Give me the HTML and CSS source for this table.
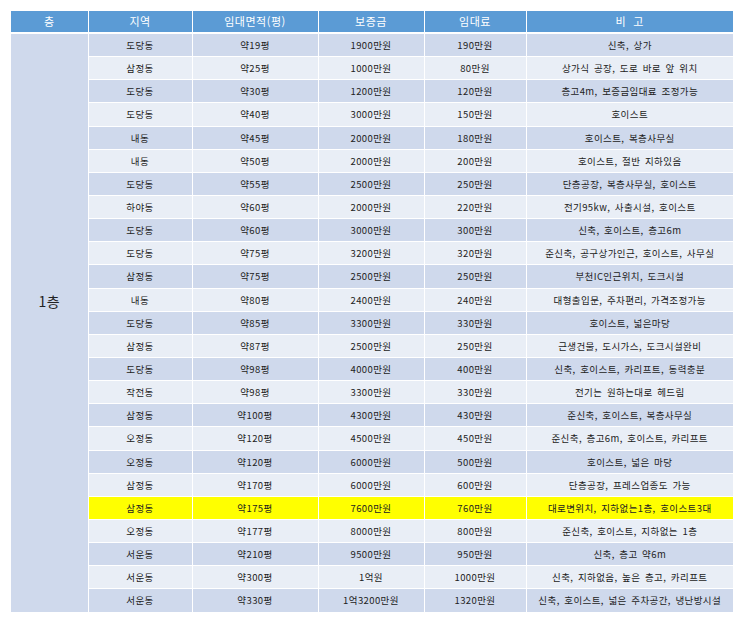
FILE: index.html
```html
<!DOCTYPE html>
<html lang="ko">
<head>
<meta charset="utf-8">
<link rel="stylesheet" href="styles.css">
</head>
<body>
<table class="list">
<colgroup>
<col class="c1"><col class="c2"><col class="c3"><col class="c4"><col class="c5"><col class="c6">
</colgroup>
<thead>
<tr><th>층</th><th>지역</th><th>임대면적(평)</th><th>보증금</th><th>임대료</th><th>비&nbsp;&nbsp;고</th></tr>
</thead>
<tbody>
<tr class="d"><td class="floor" rowspan="25">1층</td><td>도당동</td><td>약19평</td><td>1900만원</td><td>190만원</td><td>신축, 상가</td></tr>
<tr class="l"><td>삼정동</td><td>약25평</td><td>1000만원</td><td>80만원</td><td>상가식 공장, 도로 바로 앞 위치</td></tr>
<tr class="d"><td>도당동</td><td>약30평</td><td>1200만원</td><td>120만원</td><td>층고4m, 보증금임대료 조정가능</td></tr>
<tr class="l"><td>도당동</td><td>약40평</td><td>3000만원</td><td>150만원</td><td>호이스트</td></tr>
<tr class="d"><td>내동</td><td>약45평</td><td>2000만원</td><td>180만원</td><td>호이스트, 복층사무실</td></tr>
<tr class="l"><td>내동</td><td>약50평</td><td>2000만원</td><td>200만원</td><td>호이스트, 절반 지하있음</td></tr>
<tr class="d"><td>도당동</td><td>약55평</td><td>2500만원</td><td>250만원</td><td>단층공장, 복층사무실, 호이스트</td></tr>
<tr class="l"><td>하야동</td><td>약60평</td><td>2000만원</td><td>220만원</td><td>전기95kw, 사출시설, 호이스트</td></tr>
<tr class="d"><td>도당동</td><td>약60평</td><td>3000만원</td><td>300만원</td><td>신축, 호이스트, 층고6m</td></tr>
<tr class="l"><td>도당동</td><td>약75평</td><td>3200만원</td><td>320만원</td><td>준신축, 공구상가인근, 호이스트, 사무실</td></tr>
<tr class="d"><td>삼정동</td><td>약75평</td><td>2500만원</td><td>250만원</td><td>부천IC인근위치, 도크시설</td></tr>
<tr class="l"><td>내동</td><td>약80평</td><td>2400만원</td><td>240만원</td><td>대형출입문, 주차편리, 가격조정가능</td></tr>
<tr class="d"><td>도당동</td><td>약85평</td><td>3300만원</td><td>330만원</td><td>호이스트, 넓은마당</td></tr>
<tr class="l"><td>삼정동</td><td>약87평</td><td>2500만원</td><td>250만원</td><td>근생건물, 도시가스, 도크시설완비</td></tr>
<tr class="d"><td>도당동</td><td>약98평</td><td>4000만원</td><td>400만원</td><td>신축, 호이스트, 카리프트, 동력충분</td></tr>
<tr class="l"><td>작전동</td><td>약98평</td><td>3300만원</td><td>330만원</td><td>전기는 원하는대로 헤드림</td></tr>
<tr class="d"><td>삼정동</td><td>약100평</td><td>4300만원</td><td>430만원</td><td>준신축, 호이스트, 복층사무실</td></tr>
<tr class="l"><td>오정동</td><td>약120평</td><td>4500만원</td><td>450만원</td><td>준신축, 층고6m, 호이스트, 카리프트</td></tr>
<tr class="d"><td>오정동</td><td>약120평</td><td>6000만원</td><td>500만원</td><td>호이스트, 넓은 마당</td></tr>
<tr class="l"><td>삼정동</td><td>약170평</td><td>6000만원</td><td>600만원</td><td>단층공장, 프레스업종도 가능</td></tr>
<tr class="hl"><td>삼정동</td><td>약175평</td><td>7600만원</td><td>760만원</td><td>대로변위치, 지하없는1층, 호이스트3대</td></tr>
<tr class="l"><td>오정동</td><td>약177평</td><td>8000만원</td><td>800만원</td><td>준신축, 호이스트, 지하없는 1층</td></tr>
<tr class="d"><td>서운동</td><td>약210평</td><td>9500만원</td><td>950만원</td><td>신축, 층고 약6m</td></tr>
<tr class="l"><td>서운동</td><td>약300평</td><td>1억원</td><td>1000만원</td><td>신축, 지하없음, 높은 층고, 카리프트</td></tr>
<tr class="d"><td>서운동</td><td>약330평</td><td>1억3200만원</td><td>1320만원</td><td>신축, 호이스트, 넓은 주차공간, 냉난방시설</td></tr>
</tbody>
</table>
</body>
</html>
```
FILE: styles.css
```css
html, body {
  margin: 0;
  padding: 0;
  background: #ffffff;
}
body {
  padding: 11px 0 0 11px;
  font-family: "Noto Sans CJK KR", "Noto Sans", sans-serif;
}
.list {
  border-collapse: collapse;
  table-layout: fixed;
  width: 722px;
}
.c1 { width: 77px; }
.c2 { width: 104px; }
.c3 { width: 126px; }
.c4 { width: 106px; }
.c5 { width: 102px; }
.c6 { width: 207px; }
.list th {
  background: #5b9bd5;
  color: #ffffff;
  font-weight: normal;
  font-size: 11px;
  height: 21px;
  padding: 0;
  line-height: 21px;
  border-left: 1px solid #ffffff;
  border-right: 1px solid #ffffff;
  border-bottom: 2px solid #ffffff;
  letter-spacing: 0.5px;
}
.list th:first-child { border-left: none; }
.list th:last-child { border-right: none; }
.list td {
  height: 22.15px;
  padding: 0;
  line-height: 22px;
  text-align: center;
  font-size: 9.5px;
  color: #222222;
  border: 1px solid #ffffff;
  letter-spacing: 0.4px;
  word-spacing: 1.5px;
  white-space: nowrap;
  overflow: hidden;
}
.list td:first-child { border-left: none; }
.list td:last-child { border-right: none; }
.list tbody tr:last-child td { border-bottom: none; }
.d td { background: #cfd9ec; }
.l td { background: #e9eef6; }
.hl td { background: #ffff00; }
.list td.floor {
  background: #cfd9ec;
  font-size: 14px;
  color: #222222;
  border-left: none;
  border-bottom: none;
  padding-bottom: 44px;
}
```
